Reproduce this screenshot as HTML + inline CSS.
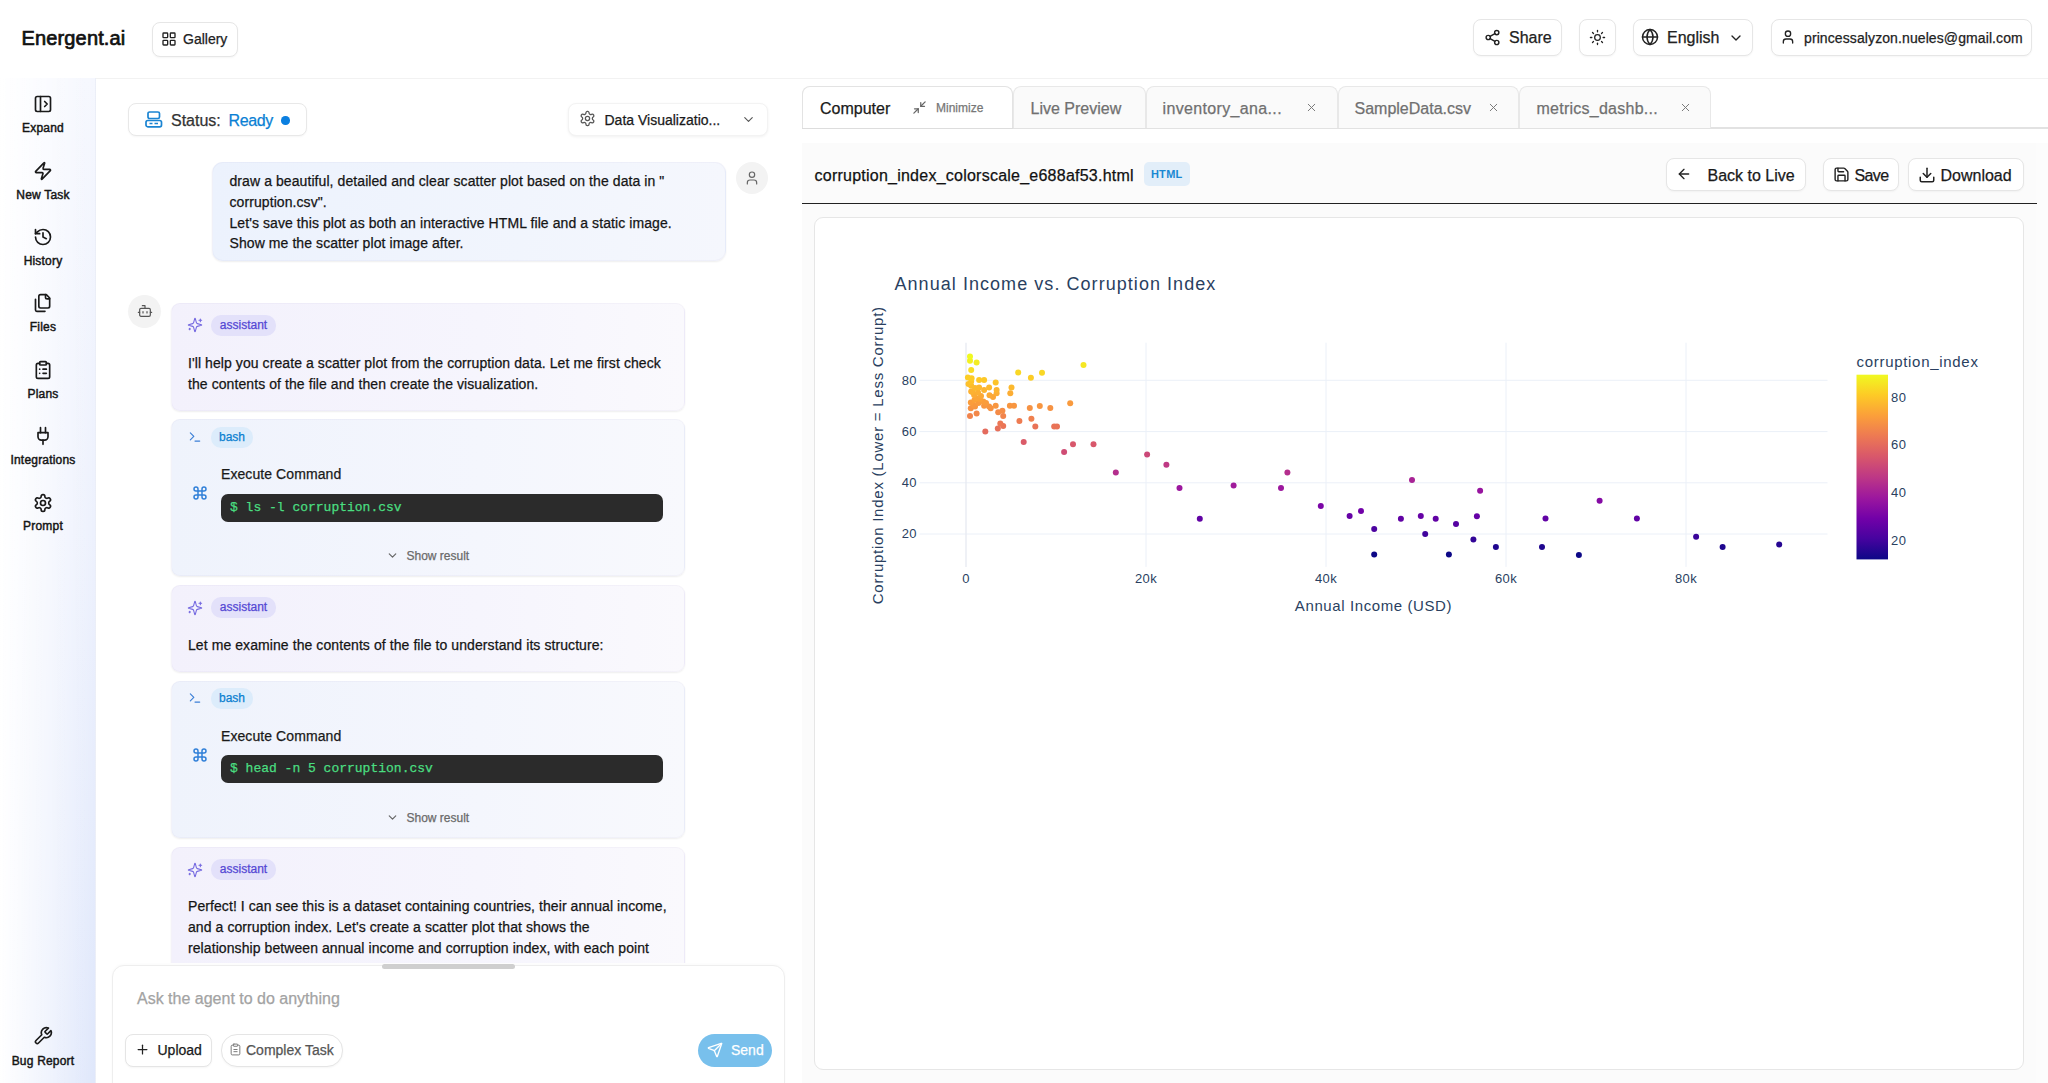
<!DOCTYPE html>
<html><head><meta charset="utf-8">
<style>
*{box-sizing:border-box;margin:0;padding:0}
html,body{width:2048px;height:1083px;overflow:hidden;background:#fff;font-family:"Liberation Sans",sans-serif;color:#1a1a1a}
.abs{position:absolute}
svg.i{fill:none;stroke:currentColor;stroke-width:2;stroke-linecap:round;stroke-linejoin:round;position:absolute}
.btn{position:absolute;border:1px solid #e6e6e6;border-radius:8px;background:#fff;box-shadow:0 1px 2px rgba(0,0,0,0.04)}
.t{position:absolute;white-space:nowrap;line-height:1}
.msg,.t,.badge,.code{-webkit-text-stroke:0.25px currentColor}
/* header */
#header{position:absolute;left:0;top:0;width:2048px;height:79px;background:#fff;border-bottom:1px solid #f2f2f2}
/* sidebar */
#side{position:absolute;left:0;top:78px;width:96px;height:1005px;background:linear-gradient(90deg,rgba(255,255,255,1) 0%,rgba(255,255,255,0.55) 50%,rgba(255,255,255,0) 100%),linear-gradient(180deg,#f5f7fe 0%,#edf1fd 45%,#dfe7fb 100%);border-right:1px solid rgba(200,208,235,0.35)}
.sitem{position:absolute;left:0;width:86px;text-align:center;font-size:12px;font-weight:400;line-height:1;white-space:nowrap;color:#151515;letter-spacing:0.2px;-webkit-text-stroke:0.45px #151515}
/* chat */
.card{position:absolute;border-radius:9px;border:1px solid rgba(80,70,140,0.035);box-shadow:0 1px 2px rgba(0,0,0,0.07)}
.asst{background:linear-gradient(90deg,#f3f1fc,#f6f5fd 60%,#faf9fd)}
.bash{background:linear-gradient(90deg,#eff3fc,#f4f6fd 60%,#f8f9fd)}
.badge{position:absolute;height:21px;border-radius:10px;font-size:13px;line-height:21px;padding:0 8px}
.msg{position:absolute;font-size:14px;line-height:21px;color:#151515;white-space:nowrap;letter-spacing:0.08px}
.code{position:absolute;left:221px;width:442px;height:28px;background:#2b2b2b;border-radius:7px;font-family:"Liberation Mono",monospace;font-size:13px;color:#4ade80;line-height:28px;padding-left:9px}
.tab{position:absolute;top:86px;height:42px;border:1px solid #e8e8e8;border-bottom:none;border-radius:8px 8px 0 0;background:#fafafa;font-size:16px;color:#6b6b6b}
</style></head>
<body>
<div id="header">
  <div class="t" style="left:21.5px;top:27.6px;font-size:20px;font-weight:400;color:#111;letter-spacing:0.15px;-webkit-text-stroke:0.7px #111">Energent.ai</div>
  <div class="btn" style="left:152px;top:22px;width:86px;height:35px"></div>
  <svg class="i" style="left:161px;top:31px;color:#222" width="16" height="16" viewBox="0 0 24 24"><rect width="7" height="7" x="3" y="3" rx="1"/><rect width="7" height="7" x="14" y="3" rx="1"/><rect width="7" height="7" x="14" y="14" rx="1"/><rect width="7" height="7" x="3" y="14" rx="1"/></svg>
  <div class="t" style="left:183px;top:32px;font-size:14px;color:#222">Gallery</div>

  <div class="btn" style="left:1473px;top:19px;width:89px;height:37px"></div>
  <svg class="i" style="left:1484px;top:29px;color:#222" width="17" height="17" viewBox="0 0 24 24"><circle cx="18" cy="5" r="3"/><circle cx="6" cy="12" r="3"/><circle cx="18" cy="19" r="3"/><line x1="8.59" x2="15.42" y1="13.51" y2="17.49"/><line x1="15.41" x2="8.59" y1="6.51" y2="10.49"/></svg>
  <div class="t" style="left:1509px;top:30px;font-size:16px;color:#222">Share</div>

  <div class="btn" style="left:1579px;top:19px;width:37px;height:37px"></div>
  <svg class="i" style="left:1589px;top:29px;color:#222;stroke-width:1.8" width="17" height="17" viewBox="0 0 24 24"><circle cx="12" cy="12" r="4"/><path d="M12 2v2"/><path d="M12 20v2"/><path d="m4.93 4.93 1.41 1.41"/><path d="m17.66 17.66 1.41 1.41"/><path d="M2 12h2"/><path d="M20 12h2"/><path d="m6.34 17.66-1.41 1.41"/><path d="m19.07 4.93-1.41 1.41"/></svg>

  <div class="btn" style="left:1633px;top:19px;width:120px;height:37px"></div>
  <svg class="i" style="left:1641px;top:28px;color:#222" width="18" height="18" viewBox="0 0 24 24"><circle cx="12" cy="12" r="10"/><path d="M12 2a14.5 14.5 0 0 0 0 20 14.5 14.5 0 0 0 0-20"/><path d="M2 12h20"/></svg>
  <div class="t" style="left:1667px;top:30px;font-size:16px;color:#222">English</div>
  <svg class="i" style="left:1728px;top:30px;color:#222" width="16" height="16" viewBox="0 0 24 24"><path d="m6 9 6 6 6-6"/></svg>

  <div class="btn" style="left:1771px;top:19px;width:261px;height:37px"></div>
  <svg class="i" style="left:1780px;top:29px;color:#222" width="16" height="16" viewBox="0 0 24 24"><path d="M19 21v-2a4 4 0 0 0-4-4H9a4 4 0 0 0-4 4v2"/><circle cx="12" cy="7" r="4"/></svg>
  <div class="t" style="left:1804px;top:31px;font-size:14px;color:#222;letter-spacing:0.1px">princessalyzon.nueles@gmail.com</div>
</div>

<div id="side">
  <svg class="i" style="left:33px;top:16.4px;color:#1a1a1a" width="20" height="20" viewBox="0 0 24 24"><rect width="18" height="18" x="3" y="3" rx="2"/><path d="M9 3v18"/><path d="m14 9 3 3-3 3"/></svg>
  <div class="sitem" style="top:44.3px">Expand</div>
  <svg class="i" style="left:33px;top:82.8px;color:#1a1a1a" width="20" height="20" viewBox="0 0 24 24"><path d="M4 14a1 1 0 0 1-.78-1.63l9.9-10.2a.5.5 0 0 1 .86.46l-1.92 6.02A1 1 0 0 0 13 10h7a1 1 0 0 1 .78 1.63l-9.9 10.2a.5.5 0 0 1-.86-.46l1.92-6.02A1 1 0 0 0 11 14z"/></svg>
  <div class="sitem" style="top:110.7px">New Task</div>
  <svg class="i" style="left:33px;top:149.1px;color:#1a1a1a" width="20" height="20" viewBox="0 0 24 24"><path d="M3 12a9 9 0 1 0 9-9 9.75 9.75 0 0 0-6.74 2.74L3 8"/><path d="M3 3v5h5"/><path d="M12 7v5l4 2"/></svg>
  <div class="sitem" style="top:177.0px">History</div>
  <svg class="i" style="left:33px;top:215.4px;color:#1a1a1a" width="20" height="20" viewBox="0 0 24 24"><path d="M20 7h-3a2 2 0 0 1-2-2V2"/><path d="M9 18a2 2 0 0 1-2-2V4a2 2 0 0 1 2-2h7l4 4v10a2 2 0 0 1-2 2Z"/><path d="M3 7.6v12.8A1.6 1.6 0 0 0 4.6 22h9.8"/></svg>
  <div class="sitem" style="top:243.3px">Files</div>
  <svg class="i" style="left:33px;top:281.8px;color:#1a1a1a" width="20" height="20" viewBox="0 0 24 24"><rect width="8" height="4" x="8" y="2" rx="1" ry="1"/><path d="M16 4h2a2 2 0 0 1 2 2v14a2 2 0 0 1-2 2H6a2 2 0 0 1-2-2V6a2 2 0 0 1 2-2h2"/><path d="M12 11h4"/><path d="M12 16h4"/><path d="M8 11h.01"/><path d="M8 16h.01"/></svg>
  <div class="sitem" style="top:309.7px">Plans</div>
  <svg class="i" style="left:33px;top:348.1px;color:#1a1a1a" width="20" height="20" viewBox="0 0 24 24"><path d="M12 22v-5"/><path d="M9 8V2"/><path d="M15 8V2"/><path d="M18 8v5a4 4 0 0 1-4 4h-4a4 4 0 0 1-4-4V8Z"/></svg>
  <div class="sitem" style="top:376.0px">Integrations</div>
  <svg class="i" style="left:33px;top:414.5px;color:#1a1a1a" width="20" height="20" viewBox="0 0 24 24"><path d="M12.22 2h-.44a2 2 0 0 0-2 2v.18a2 2 0 0 1-1 1.73l-.43.25a2 2 0 0 1-2 0l-.15-.08a2 2 0 0 0-2.73.73l-.22.38a2 2 0 0 0 .73 2.730l.15.1a2 2 0 0 1 1 1.72v.51a2 2 0 0 1-1 1.74l-.15.09a2 2 0 0 0-.73 2.73l.22.38a2 2 0 0 0 2.73.73l.15-.08a2 2 0 0 1 2 0l.43.25a2 2 0 0 1 1 1.73V20a2 2 0 0 0 2 2h.44a2 2 0 0 0 2-2v-.18a2 2 0 0 1 1-1.73l.43-.25a2 2 0 0 1 2 0l.15.08a2 2 0 0 0 2.73-.73l.22-.39a2 2 0 0 0-.73-2.73l-.15-.08a2 2 0 0 1-1-1.74v-.5a2 2 0 0 1 1-1.74l.15-.09a2 2 0 0 0 .73-2.73l-.22-.38a2 2 0 0 0-2.73-.73l-.15.08a2 2 0 0 1-2 0l-.43-.25a2 2 0 0 1-1-1.73V4a2 2 0 0 0-2-2z"/><circle cx="12" cy="12" r="3"/></svg>
  <div class="sitem" style="top:442.4px">Prompt</div>
  <svg class="i" style="left:33px;top:947.5px;color:#1a1a1a" width="20" height="20" viewBox="0 0 24 24"><path d="M14.7 6.3a1 1 0 0 0 0 1.4l1.6 1.6a1 1 0 0 0 1.4 0l3.77-3.77a6 6 0 0 1-7.94 7.94l-6.91 6.91a2.12 2.12 0 0 1-3-3l6.91-6.91a6 6 0 0 1 7.94-7.94l-3.76 3.76z"/></svg>
  <div class="sitem" style="top:976.6px">Bug Report</div>
</div>

<!-- CHAT -->
<div id="chat">
  <div class="btn" style="left:128px;top:102.5px;width:178.5px;height:33px;border-color:#e8e8e8"></div>
  <svg class="abs" style="left:145px;top:111px" width="18" height="17" viewBox="0 0 18 17"><rect x="3" y="1" width="11.5" height="6.5" rx="1.6" fill="none" stroke="#1a84d2" stroke-width="1.7"/><rect x="1" y="9.5" width="15.5" height="6.3" rx="1.8" fill="none" stroke="#1a84d2" stroke-width="1.7"/><path d="M4.5 12.6h3M9.5 12.6h3.5" stroke="#1a84d2" stroke-width="1.5"/></svg>
  <div class="t" style="left:171px;top:113.3px;font-size:16px;color:#333">Status:</div>
  <div class="t" style="left:228.5px;top:113.3px;font-size:16px;color:#0a7fd4;letter-spacing:-0.4px">Ready</div>
  <div class="abs" style="left:281px;top:116px;width:8.5px;height:8.5px;border-radius:50%;background:#0b7fe0"></div>

  <div class="btn" style="left:567.5px;top:103px;width:200px;height:33px;border-color:#f3f3f3;box-shadow:0 1px 3px rgba(0,0,0,0.06)"></div>
  <svg class="i" style="left:578.5px;top:110px;color:#555;stroke-width:1.8" width="17" height="17" viewBox="0 0 24 24"><path d="M12.22 2h-.44a2 2 0 0 0-2 2v.18a2 2 0 0 1-1 1.73l-.43.25a2 2 0 0 1-2 0l-.15-.08a2 2 0 0 0-2.73.73l-.22.38a2 2 0 0 0 .73 2.73l.15.1a2 2 0 0 1 1 1.72v.51a2 2 0 0 1-1 1.74l-.15.09a2 2 0 0 0-.73 2.73l.22.38a2 2 0 0 0 2.73.73l.15-.08a2 2 0 0 1 2 0l.43.25a2 2 0 0 1 1 1.73V20a2 2 0 0 0 2 2h.44a2 2 0 0 0 2-2v-.18a2 2 0 0 1 1-1.73l.43-.25a2 2 0 0 1 2 0l.15.08a2 2 0 0 0 2.73-.73l.22-.39a2 2 0 0 0-.73-2.73l-.15-.08a2 2 0 0 1-1-1.74v-.5a2 2 0 0 1 1-1.74l.15-.09a2 2 0 0 0 .73-2.73l-.22-.38a2 2 0 0 0-2.73-.73l-.15.08a2 2 0 0 1-2 0l-.43-.25a2 2 0 0 1-1-1.73V4a2 2 0 0 0-2-2z"/><circle cx="12" cy="12" r="3"/></svg>
  <div class="t" style="left:604.5px;top:112.5px;font-size:14px;color:#1a1a1a">Data Visualizatio...</div>
  <svg class="i" style="left:741px;top:111.5px;color:#555;stroke-width:1.8" width="15" height="15" viewBox="0 0 24 24"><path d="m6 9 6 6 6-6"/></svg>

  <div class="card" style="left:211.5px;top:161.5px;width:514px;height:99.5px;background:linear-gradient(90deg,#ecf2fd,#f1f5fd 60%,#f5f7fd);border-radius:11px"></div>
  <div class="msg" style="left:229.5px;top:171.1px">draw a beautiful, detailed and clear scatter plot based on the data in "</div>
  <div class="msg" style="left:229.5px;top:191.8px">corruption.csv".</div>
  <div class="msg" style="left:229.5px;top:212.5px">Let's save this plot as both an interactive HTML file and a static image.</div>
  <div class="msg" style="left:229.5px;top:233.2px">Show me the scatter plot image after.</div>
  <div class="abs" style="left:736px;top:162px;width:32px;height:32px;border-radius:50%;background:#f3f3f3"></div>
  <svg class="i" style="left:744px;top:170px;color:#666;stroke-width:1.8" width="16" height="16" viewBox="0 0 24 24"><path d="M19 21v-2a4 4 0 0 0-4-4H9a4 4 0 0 0-4 4v2"/><circle cx="12" cy="7" r="4"/></svg>

  <div class="abs" style="left:128px;top:295px;width:33px;height:33px;border-radius:50%;background:#f3f3f3"></div>
  <svg class="i" style="left:136.5px;top:303px;color:#555;stroke-width:1.8" width="16" height="16" viewBox="0 0 24 24"><path d="M12 8V4H8"/><rect width="16" height="12" x="4" y="8" rx="2"/><path d="M2 14h2"/><path d="M20 14h2"/><path d="M15 13v2"/><path d="M9 13v2"/></svg>
<div class="abs" style="left:96px;top:79px;width:704px;height:884px;overflow:hidden">
<div class="abs" style="left:-96px;top:-79px;width:800px;height:1083px">
  <div class="card asst" style="left:171px;top:302.5px;width:514px;height:108px"></div>
  <svg class="i" style="left:187px;top:317.0px;color:#7468e0;stroke-width:1.6" width="16" height="16" viewBox="0 0 24 24"><path d="M9.937 15.5A2 2 0 0 0 8.5 14.063l-6.135-1.582a.5.5 0 0 1 0-.962L8.5 9.936A2 2 0 0 0 9.937 8.5l1.582-6.135a.5.5 0 0 1 .963 0L14.063 8.5A2 2 0 0 0 15.5 9.937l6.135 1.581a.5.5 0 0 1 0 .964L15.5 14.063a2 2 0 0 0-1.437 1.437l-1.582 6.135a.5.5 0 0 1-.963 0z"/><path d="M20 3v4"/><path d="M22 5h-4"/><path d="M4 17v2"/><path d="M5 18H3"/></svg>
  <div class="badge" style="left:211px;top:314.5px;width:65px;background:#e3e1fa;color:#5448d4;font-size:12px;text-align:center">assistant</div>
  <div class="msg" style="left:188px;top:353.2px">I'll help you create a scatter plot from the corruption data. Let me first check</div>
  <div class="msg" style="left:188px;top:374.2px">the contents of the file and then create the visualization.</div>
  <div class="card bash" style="left:171px;top:419px;width:514px;height:157px"></div>
  <svg class="i" style="left:188px;top:430px;color:#3b7fd6;stroke-width:2" width="14" height="14" viewBox="0 0 24 24"><polyline points="4 17 10 11 4 5"/><line x1="12" x2="20" y1="19" y2="19"/></svg>
  <div class="badge" style="left:211px;top:427.0px;width:42px;background:#dcecfb;color:#0a7fd0;font-size:12px;text-align:center;padding:0">bash</div>
  <div class="msg" style="left:221px;top:464.4px;color:#1a1a1a">Execute Command</div>
  <svg class="i" style="left:192px;top:485px;color:#2f7fd8;stroke-width:2.2" width="16" height="16" viewBox="0 0 24 24"><path d="M15 6v12a3 3 0 1 0 3-3H6a3 3 0 1 0 3 3V6a3 3 0 1 0-3 3h12a3 3 0 1 0-3-3"/></svg>
  <div class="code" style="top:493.6px">$ ls -l corruption.csv</div>
  <svg class="i" style="left:386.0px;top:549.0px;color:#666;stroke-width:2.2" width="13" height="13" viewBox="0 0 24 24"><path d="m6 9 6 6 6-6"/></svg>
  <div class="t" style="left:406.5px;top:549.7px;font-size:12px;color:#6a6a6a">Show result</div>
  <div class="card asst" style="left:171px;top:585px;width:514px;height:87px"></div>
  <svg class="i" style="left:187px;top:599.5px;color:#7468e0;stroke-width:1.6" width="16" height="16" viewBox="0 0 24 24"><path d="M9.937 15.5A2 2 0 0 0 8.5 14.063l-6.135-1.582a.5.5 0 0 1 0-.962L8.5 9.936A2 2 0 0 0 9.937 8.5l1.582-6.135a.5.5 0 0 1 .963 0L14.063 8.5A2 2 0 0 0 15.5 9.937l6.135 1.581a.5.5 0 0 1 0 .964L15.5 14.063a2 2 0 0 0-1.437 1.437l-1.582 6.135a.5.5 0 0 1-.963 0z"/><path d="M20 3v4"/><path d="M22 5h-4"/><path d="M4 17v2"/><path d="M5 18H3"/></svg>
  <div class="badge" style="left:211px;top:597px;width:65px;background:#e3e1fa;color:#5448d4;font-size:12px;text-align:center">assistant</div>
  <div class="msg" style="left:188px;top:634.7px">Let me examine the contents of the file to understand its structure:</div>
  <div class="card bash" style="left:171px;top:681px;width:514px;height:157px"></div>
  <svg class="i" style="left:188px;top:691.2px;color:#3b7fd6;stroke-width:2" width="14" height="14" viewBox="0 0 24 24"><polyline points="4 17 10 11 4 5"/><line x1="12" x2="20" y1="19" y2="19"/></svg>
  <div class="badge" style="left:211px;top:688.2px;width:42px;background:#dcecfb;color:#0a7fd0;font-size:12px;text-align:center;padding:0">bash</div>
  <div class="msg" style="left:221px;top:725.7px;color:#1a1a1a">Execute Command</div>
  <svg class="i" style="left:192px;top:747px;color:#2f7fd8;stroke-width:2.2" width="16" height="16" viewBox="0 0 24 24"><path d="M15 6v12a3 3 0 1 0 3-3H6a3 3 0 1 0 3 3V6a3 3 0 1 0-3 3h12a3 3 0 1 0-3-3"/></svg>
  <div class="code" style="top:754.8px">$ head -n 5 corruption.csv</div>
  <svg class="i" style="left:386.0px;top:811.0px;color:#666;stroke-width:2.2" width="13" height="13" viewBox="0 0 24 24"><path d="m6 9 6 6 6-6"/></svg>
  <div class="t" style="left:406.5px;top:811.7px;font-size:12px;color:#6a6a6a">Show result</div>
  <div class="card asst" style="left:171px;top:847px;width:514px;height:150px"></div>
  <svg class="i" style="left:187px;top:861.5px;color:#7468e0;stroke-width:1.6" width="16" height="16" viewBox="0 0 24 24"><path d="M9.937 15.5A2 2 0 0 0 8.5 14.063l-6.135-1.582a.5.5 0 0 1 0-.962L8.5 9.936A2 2 0 0 0 9.937 8.5l1.582-6.135a.5.5 0 0 1 .963 0L14.063 8.5A2 2 0 0 0 15.5 9.937l6.135 1.581a.5.5 0 0 1 0 .964L15.5 14.063a2 2 0 0 0-1.437 1.437l-1.582 6.135a.5.5 0 0 1-.963 0z"/><path d="M20 3v4"/><path d="M22 5h-4"/><path d="M4 17v2"/><path d="M5 18H3"/></svg>
  <div class="badge" style="left:211px;top:859px;width:65px;background:#e3e1fa;color:#5448d4;font-size:12px;text-align:center">assistant</div>
  <div class="msg" style="left:188px;top:895.9px">Perfect! I can see this is a dataset containing countries, their annual income,</div>
  <div class="msg" style="left:188px;top:916.9px">and a corruption index. Let's create a scatter plot that shows the</div>
  <div class="msg" style="left:188px;top:937.9px">relationship between annual income and corruption index, with each point</div>
  <div class="msg" style="left:188px;top:958.9px">colored by its corruption index value.</div>
</div></div>
  <div class="abs" style="left:112px;top:964.5px;width:673px;height:130px;border:1px solid #eeeeee;border-radius:12px;background:#fff;box-shadow:0 -1px 3px rgba(0,0,0,0.025)"></div>
  <div class="abs" style="left:382px;top:964px;width:133px;height:4.5px;border-radius:3px;background:#cfcfcf"></div>
  <div class="t" style="left:137px;top:991px;font-size:16px;color:#a3a3a3">Ask the agent to do anything</div>
  <div class="btn" style="left:125px;top:1033.5px;width:87px;height:33px;border-color:#e5e5e5;border-radius:8px"></div>
  <svg class="i" style="left:134.5px;top:1042px;color:#222;stroke-width:2" width="15" height="15" viewBox="0 0 24 24"><path d="M5 12h14"/><path d="M12 5v14"/></svg>
  <div class="t" style="left:157.5px;top:1043px;font-size:14px;color:#1a1a1a">Upload</div>
  <div class="btn" style="left:220.5px;top:1033.5px;width:122px;height:33px;border-color:#e5e5e5;border-radius:16px"></div>
  <svg class="i" style="left:229px;top:1043px;color:#777;stroke-width:1.8" width="13" height="13" viewBox="0 0 24 24"><rect width="8" height="4" x="8" y="2" rx="1" ry="1"/><path d="M16 4h2a2 2 0 0 1 2 2v14a2 2 0 0 1-2 2H6a2 2 0 0 1-2-2V6a2 2 0 0 1 2-2h2"/><path d="M9 12h6"/><path d="M9 16h6"/></svg>
  <div class="t" style="left:246px;top:1043px;font-size:14px;color:#555">Complex Task</div>
  <div class="abs" style="left:698px;top:1033.5px;width:74px;height:33px;border-radius:16.5px;background:#78c0ec"></div>
  <svg class="i" style="left:706.5px;top:1042px;color:#fff;stroke-width:2" width="16" height="16" viewBox="0 0 24 24"><path d="M14.536 21.686a.5.5 0 0 0 .937-.024l6.5-19a.496.496 0 0 0-.635-.635l-19 6.5a.5.5 0 0 0-.024.937l7.93 3.18a2 2 0 0 1 1.112 1.11z"/><path d="m21.854 2.147-10.94 10.939"/></svg>
  <div class="t" style="left:731px;top:1043px;font-size:14px;color:#fff">Send</div>
</div>

<!-- RIGHT -->
<div id="right">
  <div class="abs" style="left:802px;top:143px;width:1246px;height:940px;background:linear-gradient(90deg,#fbfbfb 0,#fbfbfb 1234px,#fcfcfc 1234px)"></div>
  <div class="abs" style="left:802px;top:127px;width:1246px;height:1.5px;background:#e2e2e2"></div>
  <div class="tab" style="left:802px;width:211px;background:#fff;border-color:#e3e3e3;box-shadow:0 1px 0 #ddd"></div>
  <div class="t" style="left:820px;top:101px;font-size:16px;color:#1a1a1a">Computer</div>
  <svg class="i" style="left:911.5px;top:99.5px;color:#666;stroke-width:2" width="15" height="15" viewBox="0 0 24 24"><polyline points="4 14 10 14 10 20"/><polyline points="20 10 14 10 14 4"/><line x1="14" x2="21" y1="10" y2="3"/><line x1="3" x2="10" y1="21" y2="14"/></svg>
  <div class="t" style="left:936px;top:101.8px;font-size:12px;color:#777">Minimize</div>
  <div class="tab" style="left:1013px;width:133px"></div>
  <div class="t" style="left:1030.5px;top:101px;font-size:16px;color:#707070">Live Preview</div>
  <div class="tab" style="left:1146px;width:191.5px"></div>
  <div class="t" style="left:1162.5px;top:101px;font-size:16px;color:#707070;letter-spacing:0.35px">inventory_ana...</div>
  <svg class="i" style="left:1305px;top:101px;color:#777;stroke-width:1.8" width="13" height="13" viewBox="0 0 24 24"><path d="M18 6 6 18"/><path d="m6 6 12 12"/></svg>
  <div class="tab" style="left:1337.5px;width:181px"></div>
  <div class="t" style="left:1354.5px;top:101px;font-size:16px;color:#707070">SampleData.csv</div>
  <svg class="i" style="left:1487px;top:101px;color:#777;stroke-width:1.8" width="13" height="13" viewBox="0 0 24 24"><path d="M18 6 6 18"/><path d="m6 6 12 12"/></svg>
  <div class="tab" style="left:1518.5px;width:192px"></div>
  <div class="t" style="left:1536.5px;top:101px;font-size:16px;color:#707070;letter-spacing:0.25px">metrics_dashb...</div>
  <svg class="i" style="left:1679px;top:101px;color:#777;stroke-width:1.8" width="13" height="13" viewBox="0 0 24 24"><path d="M18 6 6 18"/><path d="m6 6 12 12"/></svg>

  <div class="t" style="left:814.5px;top:168px;font-size:16px;color:#111;letter-spacing:0.24px">corruption_index_colorscale_e688af53.html</div>
  <div class="abs" style="left:1143.5px;top:161.5px;width:46.5px;height:24.5px;border-radius:5px;background:#e2eef9;color:#1a88d2;font-size:11px;font-weight:700;line-height:24.5px;text-align:center;letter-spacing:0.3px">HTML</div>

  <div class="btn" style="left:1665.5px;top:158px;width:140px;height:32.5px;border-color:#e6e6e6"></div>
  <svg class="i" style="left:1676px;top:166px;color:#222;stroke-width:2" width="16" height="16" viewBox="0 0 24 24"><path d="m12 19-7-7 7-7"/><path d="M19 12H5"/></svg>
  <div class="t" style="left:1707.5px;top:167.5px;font-size:16px;color:#1a1a1a">Back to Live</div>
  <div class="btn" style="left:1822.5px;top:158px;width:76px;height:32.5px;border-color:#e6e6e6"></div>
  <svg class="i" style="left:1832.5px;top:165.5px;color:#222;stroke-width:2" width="17" height="17" viewBox="0 0 24 24"><path d="M15.2 3a2 2 0 0 1 1.4.6l3.8 3.8a2 2 0 0 1 .6 1.4V19a2 2 0 0 1-2 2H5a2 2 0 0 1-2-2V5a2 2 0 0 1 2-2z"/><path d="M17 21v-7a1 1 0 0 0-1-1H8a1 1 0 0 0-1 1v7"/><path d="M7 3v4a1 1 0 0 0 1 1h7"/></svg>
  <div class="t" style="left:1854.5px;top:167.5px;font-size:16px;color:#1a1a1a;letter-spacing:-0.6px">Save</div>
  <div class="btn" style="left:1908px;top:158px;width:115.5px;height:32.5px;border-color:#e6e6e6"></div>
  <svg class="i" style="left:1918px;top:165.5px;color:#222;stroke-width:2" width="18" height="18" viewBox="0 0 24 24"><path d="M21 15v4a2 2 0 0 1-2 2H5a2 2 0 0 1-2-2v-4"/><polyline points="7 10 12 15 17 10"/><line x1="12" x2="12" y1="15" y2="3"/></svg>
  <div class="t" style="left:1940.5px;top:167.5px;font-size:16px;color:#1a1a1a">Download</div>

  <div class="abs" style="left:802px;top:202.5px;width:1234.5px;height:1.6px;background:#222"></div>

  <div class="abs" style="left:814px;top:217px;width:1210px;height:852.5px;background:#fff;border:1px solid #e6e6e6;border-radius:9px"></div>
  <svg class="abs" style="left:0;top:0" width="2048" height="1083" viewBox="0 0 2048 1083">
    <defs><linearGradient id="cb" x1="0" y1="1" x2="0" y2="0"><stop offset="0.000" stop-color="#0d0887"/><stop offset="0.111" stop-color="#46039f"/><stop offset="0.222" stop-color="#7201a8"/><stop offset="0.333" stop-color="#9c179e"/><stop offset="0.444" stop-color="#bd3786"/><stop offset="0.556" stop-color="#d8576b"/><stop offset="0.667" stop-color="#ed7953"/><stop offset="0.778" stop-color="#fb9f3a"/><stop offset="0.889" stop-color="#fdca26"/><stop offset="1.000" stop-color="#f0f921"/></linearGradient></defs>
    <g stroke="#ebf0f8" stroke-width="1">
      <line x1="919.5" x2="1827.5" y1="380.3" y2="380.3"/><line x1="919.5" x2="1827.5" y1="431.6" y2="431.6"/><line x1="919.5" x2="1827.5" y1="482.8" y2="482.8"/><line x1="919.5" x2="1827.5" y1="534" y2="534"/>
      <line x1="966" x2="966" y1="342.7" y2="566.9" stroke-width="1.3" stroke="#e6eaf2"/><line x1="1146" x2="1146" y1="342.7" y2="566.9"/><line x1="1326" x2="1326" y1="342.7" y2="566.9"/><line x1="1506" x2="1506" y1="342.7" y2="566.9"/><line x1="1686" x2="1686" y1="342.7" y2="566.9"/>
    </g>
    <circle cx="1578.9" cy="554.9" r="3" fill="#0d0887"/><circle cx="1374.2" cy="554.5" r="3" fill="#0d0887"/><circle cx="1448.9" cy="554.5" r="3" fill="#0d0887"/><circle cx="1495.9" cy="547.0" r="3" fill="#1f068f"/><circle cx="1542.0" cy="547.0" r="3" fill="#1f068f"/><circle cx="1722.6" cy="547.0" r="3" fill="#1f068f"/><circle cx="1779.2" cy="544.4" r="3" fill="#260692"/><circle cx="1473.4" cy="539.5" r="3" fill="#330597"/><circle cx="1696.1" cy="536.8" r="3" fill="#3a049a"/><circle cx="1425.2" cy="534.0" r="3" fill="#41039d"/><circle cx="1374.2" cy="529.0" r="3" fill="#4c03a0"/><circle cx="1456.0" cy="524.0" r="3" fill="#5602a2"/><circle cx="1199.8" cy="518.8" r="3" fill="#6102a4"/><circle cx="1400.9" cy="518.8" r="3" fill="#6102a4"/><circle cx="1435.7" cy="518.8" r="3" fill="#6102a4"/><circle cx="1545.5" cy="518.5" r="3" fill="#6102a5"/><circle cx="1636.9" cy="518.5" r="3" fill="#6102a5"/><circle cx="1476.9" cy="516.2" r="3" fill="#6602a6"/><circle cx="1349.6" cy="516.1" r="3" fill="#6602a6"/><circle cx="1420.8" cy="516.1" r="3" fill="#6602a6"/><circle cx="1361.0" cy="510.9" r="3" fill="#7101a8"/><circle cx="1320.8" cy="505.9" r="3" fill="#7a05a6"/><circle cx="1599.6" cy="500.8" r="3" fill="#840aa4"/><circle cx="1480.1" cy="490.8" r="3" fill="#97149f"/><circle cx="1179.5" cy="488.0" r="3" fill="#9c179e"/><circle cx="1281.0" cy="488.0" r="3" fill="#9c179e"/><circle cx="1233.6" cy="485.4" r="3" fill="#a01b9b"/><circle cx="1412.0" cy="480.1" r="3" fill="#a82395"/><circle cx="1115.8" cy="472.5" r="3" fill="#b42e8d"/><circle cx="1287.4" cy="472.5" r="3" fill="#b42e8d"/><circle cx="1166.4" cy="464.8" r="3" fill="#bf3984"/><circle cx="1147.1" cy="454.6" r="3" fill="#cb4878"/><circle cx="1064.1" cy="451.9" r="3" fill="#cf4c74"/><circle cx="1073.0" cy="444.2" r="3" fill="#d8576b"/><circle cx="1093.5" cy="444.2" r="3" fill="#d8576b"/><circle cx="1023.7" cy="442.0" r="3" fill="#da5b68"/><circle cx="985.3" cy="431.5" r="3" fill="#e46b5d"/><circle cx="997.8" cy="428.5" r="3" fill="#e7705a"/><circle cx="1035.3" cy="426.4" r="3" fill="#e97357"/><circle cx="1054.2" cy="426.4" r="3" fill="#e97357"/><circle cx="1057.0" cy="426.4" r="3" fill="#e97357"/><circle cx="1003.2" cy="426.0" r="3" fill="#ea7457"/><circle cx="1000.3" cy="423.6" r="3" fill="#ec7754"/><circle cx="1019.4" cy="421.1" r="3" fill="#ee7b51"/><circle cx="1031.4" cy="418.7" r="3" fill="#ef804f"/><circle cx="1003.2" cy="416.1" r="3" fill="#f1844c"/><circle cx="970.0" cy="416.1" r="3" fill="#f1844c"/><circle cx="976.6" cy="413.6" r="3" fill="#f38849"/><circle cx="998.2" cy="412.3" r="3" fill="#f48b47"/><circle cx="1002.4" cy="410.7" r="3" fill="#f58d46"/><circle cx="970.8" cy="408.2" r="3" fill="#f69243"/><circle cx="990.7" cy="408.2" r="3" fill="#f69243"/><circle cx="1029.8" cy="408.1" r="3" fill="#f69243"/><circle cx="1050.3" cy="408.1" r="3" fill="#f69243"/><circle cx="975.0" cy="406.5" r="3" fill="#f79541"/><circle cx="989.1" cy="406.5" r="3" fill="#f79541"/><circle cx="1039.8" cy="405.9" r="3" fill="#f89640"/><circle cx="984.1" cy="405.7" r="3" fill="#f89640"/><circle cx="995.7" cy="405.7" r="3" fill="#f89640"/><circle cx="1009.9" cy="405.7" r="3" fill="#f89640"/><circle cx="1014.0" cy="405.7" r="3" fill="#f89640"/><circle cx="973.3" cy="404.9" r="3" fill="#f8983f"/><circle cx="1070.2" cy="403.2" r="3" fill="#f99a3d"/><circle cx="978.5" cy="403.0" r="3" fill="#f99b3d"/><circle cx="986.0" cy="403.0" r="3" fill="#f99b3d"/><circle cx="970.8" cy="402.4" r="3" fill="#fa9c3c"/><circle cx="983.3" cy="401.5" r="3" fill="#fa9d3b"/><circle cx="974.5" cy="400.0" r="3" fill="#fba039"/><circle cx="979.9" cy="399.0" r="3" fill="#fba239"/><circle cx="976.6" cy="398.2" r="3" fill="#fba438"/><circle cx="993.0" cy="397.0" r="3" fill="#fba637"/><circle cx="981.0" cy="396.0" r="3" fill="#fba836"/><circle cx="989.5" cy="395.3" r="3" fill="#fba935"/><circle cx="974.1" cy="394.9" r="3" fill="#fcaa35"/><circle cx="996.6" cy="393.2" r="3" fill="#fcad33"/><circle cx="1010.3" cy="393.2" r="3" fill="#fcad33"/><circle cx="978.0" cy="392.5" r="3" fill="#fcaf33"/><circle cx="972.5" cy="392.0" r="3" fill="#fcb032"/><circle cx="971.2" cy="391.6" r="3" fill="#fcb132"/><circle cx="984.1" cy="389.9" r="3" fill="#fcb430"/><circle cx="996.6" cy="389.9" r="3" fill="#fcb430"/><circle cx="975.0" cy="388.0" r="3" fill="#fcb82f"/><circle cx="979.1" cy="387.4" r="3" fill="#fcb92e"/><circle cx="989.1" cy="387.4" r="3" fill="#fcb92e"/><circle cx="1011.5" cy="387.4" r="3" fill="#fcb92e"/><circle cx="971.2" cy="385.7" r="3" fill="#fcbc2c"/><circle cx="968.5" cy="384.0" r="3" fill="#fdc02b"/><circle cx="995.7" cy="382.4" r="3" fill="#fdc329"/><circle cx="971.2" cy="381.6" r="3" fill="#fdc429"/><circle cx="979.1" cy="379.9" r="3" fill="#fdc827"/><circle cx="984.1" cy="379.9" r="3" fill="#fdc827"/><circle cx="971.6" cy="378.3" r="3" fill="#fdcb26"/><circle cx="1030.9" cy="377.7" r="3" fill="#fccc26"/><circle cx="967.9" cy="377.4" r="3" fill="#fccd26"/><circle cx="1042.0" cy="372.7" r="3" fill="#f9d725"/><circle cx="1018.2" cy="372.4" r="3" fill="#f9d725"/><circle cx="971.2" cy="370.0" r="3" fill="#f8dd24"/><circle cx="1083.5" cy="365.0" r="3" fill="#f5e723"/><circle cx="976.6" cy="362.5" r="3" fill="#f3ed22"/><circle cx="970.0" cy="360.8" r="3" fill="#f2f022"/><circle cx="970.0" cy="356.6" r="3" fill="#f0f921"/>
    <rect x="1856.5" y="374.7" width="31.5" height="184.7" fill="url(#cb)"/>
    <g font-family="Liberation Sans" fill="#2a3f5f">
      <text x="894.5" y="290.4" font-size="18" letter-spacing="1.05">Annual Income vs. Corruption Index</text>
      <g font-size="13" letter-spacing="0.4">
        <text x="917" y="384.5" text-anchor="end">80</text><text x="917" y="436" text-anchor="end">60</text><text x="917" y="487.2" text-anchor="end">40</text><text x="917" y="538.3" text-anchor="end">20</text>
        <text x="966" y="583.4" text-anchor="middle">0</text><text x="1146" y="583.4" text-anchor="middle">20k</text><text x="1326" y="583.4" text-anchor="middle">40k</text><text x="1506" y="583.4" text-anchor="middle">60k</text><text x="1686" y="583.4" text-anchor="middle">80k</text>
        <text x="1891" y="401.5">80</text><text x="1891" y="448.8">60</text><text x="1891" y="497">40</text><text x="1891" y="544.9">20</text>
      </g>
      <text x="1373.5" y="611.3" font-size="15" letter-spacing="0.6" text-anchor="middle">Annual Income (USD)</text>
      <text x="1856.5" y="366.5" font-size="15" letter-spacing="0.7">corruption_index</text>
      <text transform="translate(882.5,455.2) rotate(-90)" font-size="15" letter-spacing="0.75" text-anchor="middle">Corruption Index (Lower = Less Corrupt)</text>
    </g>
  </svg>
</div>
</body></html>
